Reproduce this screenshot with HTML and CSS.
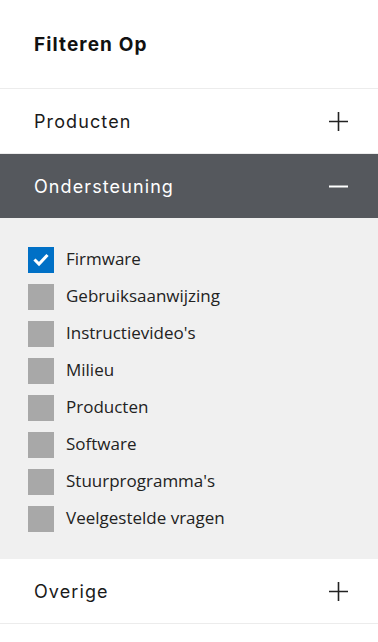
FILE: index.html
```html
<!DOCTYPE html>
<html lang="nl">
<head>
<meta charset="utf-8">
<title>Filteren Op</title>
<link rel="stylesheet" href="styles.css">
</head>
<body>
<aside class="filters">
  <h2 class="filters-title">Filteren Op</h2>

  <div class="group">
    <button class="group-head">
      <span class="group-label">Producten</span>
      <svg class="icon" viewBox="0 0 19 19" width="19" height="19"><path d="M9.5 0v19M0 9.5h19" stroke="#222" stroke-width="1.6" fill="none"/></svg>
    </button>
  </div>

  <div class="group open">
    <button class="group-head">
      <span class="group-label">Ondersteuning</span>
      <svg class="icon" viewBox="0 0 19 19" width="19" height="19"><path d="M0 9.5h19" stroke="#fff" stroke-width="2" fill="none"/></svg>
    </button>
    <ul class="options">
      <li class="option checked"><span class="box"><svg viewBox="0 0 26 26" width="26" height="26"><path d="M7.5 13.5l3.5 3.5 7.5-8" stroke="#fff" stroke-width="3" fill="none" stroke-linecap="square"/></svg></span><span class="opt-label">Firmware</span></li>
      <li class="option"><span class="box"></span><span class="opt-label">Gebruiksaanwijzing</span></li>
      <li class="option"><span class="box"></span><span class="opt-label">Instructievideo's</span></li>
      <li class="option"><span class="box"></span><span class="opt-label">Milieu</span></li>
      <li class="option"><span class="box"></span><span class="opt-label">Producten</span></li>
      <li class="option"><span class="box"></span><span class="opt-label">Software</span></li>
      <li class="option"><span class="box"></span><span class="opt-label">Stuurprogramma's</span></li>
      <li class="option"><span class="box"></span><span class="opt-label">Veelgestelde vragen</span></li>
    </ul>
  </div>

  <div class="group">
    <button class="group-head">
      <span class="group-label">Overige</span>
      <svg class="icon" viewBox="0 0 19 19" width="19" height="19"><path d="M9.5 0v19M0 9.5h19" stroke="#222" stroke-width="1.6" fill="none"/></svg>
    </button>
  </div>
</aside>
</body>
</html>
```

FILE: styles.css
```css
* { box-sizing: border-box; }
html, body { margin: 0; padding: 0; background: #fff; }
body { font-family: Inter, "Liberation Sans", sans-serif; color: #111; }

.filters { width: 378px; }

.filters-title {
  margin: 0;
  height: 88px;
  display: flex;
  align-items: center;
  padding-left: 34px;
  font-size: 19px;
  font-weight: 700;
  letter-spacing: 1.1px;
  color: #111;
  border-bottom: 1px solid #ececec;
  box-sizing: content-box;
}

.group { border-bottom: 1px solid #ececec; }
.group.open { border-bottom: none; }

.group-head {
  width: 100%;
  height: 64px;
  display: flex;
  align-items: center;
  justify-content: space-between;
  padding: 0 30px 0 34px;
  border: none;
  background: #fff;
  font-family: Inter, "Liberation Sans", sans-serif;
  font-size: 18px;
  font-weight: 400;
  letter-spacing: 1.1px;
  color: #1a1a1a;
  text-align: left;
  cursor: pointer;
}
.group.open .group-head { background: #55585d; color: #fff; }

.icon { display: block; flex: none; }

.options {
  list-style: none;
  margin: 0;
  padding: 29px 0 27px 28px;
  background: #f0f0f0;
  display: flex;
  flex-direction: column;
  gap: 11px;
}
.option {
  display: flex;
  align-items: center;
  gap: 12px;
  height: 26px;
  font-family: "Open Sans", "Noto Sans", sans-serif;
  font-size: 17px;
  color: #222;
}
.opt-label { padding-bottom: 3px; }
.box {
  width: 26px;
  height: 26px;
  background: #a8a8a8;
  flex: none;
}
.box svg { display: block; }
.option.checked .box { background: #0070c6; }
```
